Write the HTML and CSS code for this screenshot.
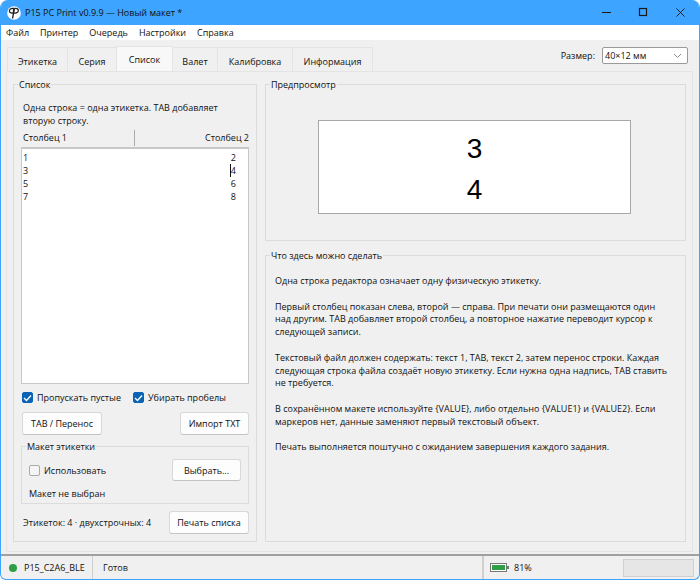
FILE: index.html
```html
<!DOCTYPE html>
<html>
<head>
  <title>P15 PC Print</title>
  <link rel="stylesheet" href="styles.css">
</head>
<body>
  <div class="window">
    <div class="titlebar">
      <svg class="app-icon" width="14" height="14" viewBox="0 0 14 14">
        <circle cx="7" cy="7" r="6.800" fill="#fff"/>
        <path d="M6.500 2.500C4 2 2 3.500 2.500 5.500C3 7 5 7.500 6.500 6.500ZM7.500 2.500L5.500 12.500M7.500 2.500C10 2 12 3 11.200 5.200C10.500 7 8.500 7.500 6.800 6.800" fill="none" stroke="#222" stroke-width="1.300"/>
      </svg>
      <span class="title">P15 PC Print v0.9.9 — Новый макет *</span>
      <div class="win-controls">
        <svg width="37" height="25" viewBox="0 0 37 25"><path d="M14 12.500H23" stroke="#1a1a1a" fill="none"/></svg>
        <svg width="37" height="25" viewBox="0 0 37 25"><rect x="14.500" y="8.500" width="7" height="7" stroke="#1a1a1a" fill="none" stroke-width="1.200"/></svg>
        <svg width="37" height="25" viewBox="0 0 37 25"><path d="M14.500 8.500L22.500 16.500M22.500 8.500L14.500 16.500" stroke="#1a1a1a" fill="none"/></svg>
      </div>
    </div>

    <div class="menubar">
      <span>Файл</span>
      <span>Принтер</span>
      <span>Очередь</span>
      <span>Настройки</span>
      <span>Справка</span>
    </div>

    <div class="tabs-row">
      <div class="tabs">
        <div class="tab w-label">Этикетка</div>
        <div class="tab w-series">Серия</div>
        <div class="tab active">Список</div>
        <div class="tab w-valet">Валет</div>
        <div class="tab w-calib">Калибровка</div>
        <div class="tab w-info">Информация</div>
      </div>
      <div class="size-picker">
        <label>Размер:</label>
        <div class="combo">
          <span>40×12 мм</span>
          <svg width="9" height="6" viewBox="0 0 9 6"><path d="M1 1L4.500 4.500L8 1" stroke="#888" fill="none"/></svg>
        </div>
      </div>
    </div>

    <div class="tab-pane">
      <div class="group list-group">
        <div class="group-title">Список</div>
        <p class="hint">Одна строка = одна этикетка. TAB добавляет<br>вторую строку.</p>
        <div class="col-header">
          <span class="col-first">Столбец 1</span>
          <span class="col-sep"></span>
          <span>Столбец 2</span>
        </div>
        <div class="editor">
          <div class="ed-row"><span>1</span><span class="ed-right">2</span></div>
          <div class="ed-row"><span>3</span><span class="ed-right"><i class="caret"></i>4</span></div>
          <div class="ed-row"><span>5</span><span class="ed-right">6</span></div>
          <div class="ed-row"><span>7</span><span class="ed-right">8</span></div>
        </div>
        <div class="checks">
          <label class="check"><span class="box on"><svg width="9" height="8" viewBox="0 0 9 8"><path d="M1 4L3.500 6.500L8 1.500" stroke="#fff" stroke-width="1.300" fill="none"/></svg></span>Пропускать пустые</label>
          <label class="check"><span class="box on"><svg width="9" height="8" viewBox="0 0 9 8"><path d="M1 4L3.500 6.500L8 1.500" stroke="#fff" stroke-width="1.300" fill="none"/></svg></span>Убирать пробелы</label>
        </div>
        <div class="btn-row">
          <button class="tab-btn">TAB / Перенос</button>
          <button class="import-btn">Импорт TXT</button>
        </div>
        <div class="group layout-group">
          <div class="group-title">Макет этикетки</div>
          <div class="layout-row">
            <label class="check"><span class="box"></span>Использовать</label>
            <button class="pick-btn">Выбрать...</button>
          </div>
          <div class="layout-note">Макет не выбран</div>
        </div>
        <div class="print-row">
          <span>Этикеток: 4 · двухстрочных: 4</span>
          <button>Печать списка</button>
        </div>
      </div>

      <div class="right-col">
        <div class="group preview-group">
          <div class="group-title">Предпросмотр</div>
          <div class="label-preview">
            <div>3</div>
            <div>4</div>
          </div>
        </div>
        <div class="group help-group">
          <div class="group-title">Что здесь можно сделать</div>
          <p>Одна строка редактора означает одну физическую этикетку.</p>
          <p>Первый столбец показан слева, второй — справа. При печати они размещаются один над другим. TAB добавляет второй столбец, а повторное нажатие переводит курсор к следующей записи.</p>
          <p>Текстовый файл должен содержать: текст 1, TAB, текст 2, затем перенос строки. Каждая следующая строка файла создаёт новую этикетку. Если нужна одна надпись, TAB ставить не требуется.</p>
          <p>В сохранённом макете используйте {VALUE}, либо отдельно {VALUE1} и {VALUE2}. Если маркеров нет, данные заменяют первый текстовый объект.</p>
          <p>Печать выполняется поштучно с ожиданием завершения каждого задания.</p>
        </div>
      </div>
    </div>

    <div class="statusbar">
      <div class="st-printer"><span class="dot"></span>P15_C2A6_BLE</div>
      <div class="st-state">Готов</div>
      <div class="st-battery">
        <svg width="20" height="10" viewBox="0 0 20 10">
          <rect x="0.500" y="0.500" width="16" height="8" fill="#fff" stroke="#777"/>
          <rect x="2" y="2" width="13" height="5" fill="#2f9e44"/>
          <rect x="17" y="3" width="2" height="3" fill="#777"/>
        </svg>
        <span>81%</span>
      </div>
      <div class="st-progress"></div>
    </div>
  </div>
</body>
</html>
```

FILE: styles.css
```css
html, body {
  margin: 0;
  padding: 0;
}
body {
  width: 700px;
  height: 580px;
  overflow: hidden;
  background: #fff;
  font-family: "Open Sans", "Noto Sans", sans-serif;
  font-size: 9px;
  color: #111;
}
.window {
  box-sizing: border-box;
  width: 700px;
  height: 580px;
  display: flex;
  flex-direction: column;
  background: #f0f0f0;
  border: 1px solid #3da5ff;
  border-top: none;
  border-radius: 8px 8px 6px 6px;
  overflow: hidden;
}
.titlebar {
  height: 25px;
  flex: none;
  display: flex;
  align-items: center;
  background: #3da5ff;
  padding-left: 6px;
}
.app-icon {
  margin-right: 4px;
}
.title {
  flex: 1;
}
.win-controls {
  display: flex;
}
.menubar {
  height: 15px;
  flex: none;
  display: flex;
  align-items: center;
  gap: 11px;
  background: #fff;
  padding-left: 5px;
  line-height: 15px;
}
.tabs-row {
  height: 31px;
  flex: none;
  display: flex;
  justify-content: space-between;
  align-items: flex-end;
  padding: 0 11px 0 6px;
}
.tabs {
  display: flex;
  align-items: flex-end;
}
.tab {
  box-sizing: border-box;
  height: 24px;
  line-height: 27px;
  text-align: center;
  background: #f0f0f0;
  border: 1px solid #e4e4e4;
  border-bottom: none;
  margin-right: -1px;
}
.w-label {
  width: 61px;
}
.w-series {
  width: 50px;
}
.w-valet {
  width: 46px;
}
.w-calib {
  width: 76px;
}
.w-info {
  width: 81px;
}
.tab.active {
  width: 57px;
  height: 25px;
  line-height: 26px;
  background: #f8f8f8;
  position: relative;
  z-index: 1;
}
.size-picker {
  display: flex;
  align-items: center;
  gap: 7px;
  margin-bottom: 7px;
}
.combo {
  box-sizing: border-box;
  width: 86px;
  height: 17px;
  display: flex;
  align-items: center;
  justify-content: space-between;
  padding: 0 5px 0 2px;
  background: #fff;
  border: 1px solid #9a9a9a;
  border-radius: 2px;
}
.tab-pane {
  flex: 1;
  min-height: 0;
  margin: 0 6px 2px 5px;
  padding: 12px 6px 9px 6px;
  border: 1px solid #e4e4e4;
  display: flex;
  gap: 8px;
}
.group {
  box-sizing: border-box;
  position: relative;
  border: 1px solid #dcdcdc;
}
.group-title {
  position: absolute;
  top: -7px;
  left: 4px;
  padding: 0 1px;
  line-height: 13px;
  background: #f0f0f0;
}
.list-group {
  width: 244px;
  flex: none;
  display: flex;
  flex-direction: column;
  padding: 16px 7px 7px 7px;
}
.hint {
  margin: 0 0 1px 2px;
  line-height: 13px;
}
.col-header {
  display: flex;
  align-items: center;
  height: 19px;
  margin: 0 0 0 2px;
}
.col-first {
  width: 111px;
}
.col-sep {
  width: 1px;
  height: 16px;
  background: #aaa;
  margin-right: auto;
}
.editor {
  box-sizing: border-box;
  flex: 1;
  min-height: 0;
  background: #fff;
  border: 1px solid #c8c8c8;
  border-top: 2px solid #c8c8c8;
  padding: 2px 0 0 1px;
}
.ed-row {
  display: flex;
  justify-content: space-between;
  height: 13px;
  line-height: 13px;
  padding-right: 12px;
}
.ed-right {
  position: relative;
}
.caret {
  position: absolute;
  left: -1px;
  top: 0;
  width: 1px;
  height: 13px;
  background: #111;
}
.checks {
  display: flex;
  gap: 12px;
  margin-top: 5px;
  height: 17px;
  align-items: center;
  padding-left: 1px;
}
.check {
  display: flex;
  align-items: center;
  gap: 4px;
}
.box {
  box-sizing: border-box;
  width: 11px;
  height: 11px;
  display: flex;
  align-items: center;
  justify-content: center;
  background: #f5f5f5;
  border: 1px solid #aaa;
  border-radius: 2px;
}
.box.on {
  background: #0b63b5;
  border-color: #0b63b5;
}
button {
  height: 23px;
  box-sizing: border-box;
  padding: 0;
  background: #fdfdfd;
  border: 1px solid #d8d8d8;
  border-bottom-color: #c4c4c4;
  border-radius: 3px;
  font-family: inherit;
  font-size: 9px;
  color: #111;
}
.btn-row {
  display: flex;
  justify-content: space-between;
  margin: 6px 0 0 1px;
}
.tab-btn {
  width: 80px;
}
.import-btn {
  width: 69px;
}
.layout-group {
  height: 58px;
  margin-top: 11px;
  padding: 0 7px 0 7px;
  flex: none;
}
.layout-row {
  display: flex;
  justify-content: space-between;
  align-items: center;
  margin-top: 12px;
}
.pick-btn {
  width: 69px;
  height: 22px;
}
.layout-note {
  margin-top: 6px;
}
.print-row {
  display: flex;
  justify-content: space-between;
  align-items: center;
  margin: 7px 0 0 2px;
}
.print-row button {
  width: 80px;
}
.right-col {
  flex: 1;
  display: flex;
  flex-direction: column;
  gap: 14px;
  min-width: 0;
}
.preview-group {
  height: 157px;
  flex: none;
  padding: 35px 0 0 52px;
}
.label-preview {
  box-sizing: border-box;
  width: 313px;
  height: 94px;
  background: #fff;
  border: 1px solid #a8a8a8;
  display: flex;
  flex-direction: column;
  align-items: center;
  font-family: "Liberation Sans", sans-serif;
  font-size: 28px;
  line-height: 41px;
  padding-top: 7px;
  color: #000;
}
.help-group {
  flex: 1;
  padding: 19px 14px 0 9px;
}
.help-group p {
  margin: 0 0 12.800px 0;
  line-height: 12.800px;
}
.statusbar {
  height: 25px;
  flex: none;
  display: flex;
  align-items: center;
  border-top: 2px solid #a0a0a0;
  box-sizing: border-box;
}
.st-printer {
  width: 92px;
  display: flex;
  align-items: center;
  gap: 7px;
  padding-left: 8px;
  box-sizing: border-box;
  height: 100%;
  border-right: 1px solid #cfcfcf;
}
.dot {
  width: 8px;
  height: 8px;
  border-radius: 50%;
  background: #2f9e44;
}
.st-state {
  flex: 1;
  padding-left: 10px;
}
.st-battery {
  width: 141px;
  box-sizing: border-box;
  height: 100%;
  display: flex;
  align-items: center;
  gap: 4px;
  padding-left: 6px;
  border-left: 2px solid #cfcfcf;
}
.st-progress {
  box-sizing: border-box;
  width: 71px;
  height: 18px;
  margin-right: 5px;
  background: #e6e6e6;
  border: 1px solid #d0d0d0;
}
```
